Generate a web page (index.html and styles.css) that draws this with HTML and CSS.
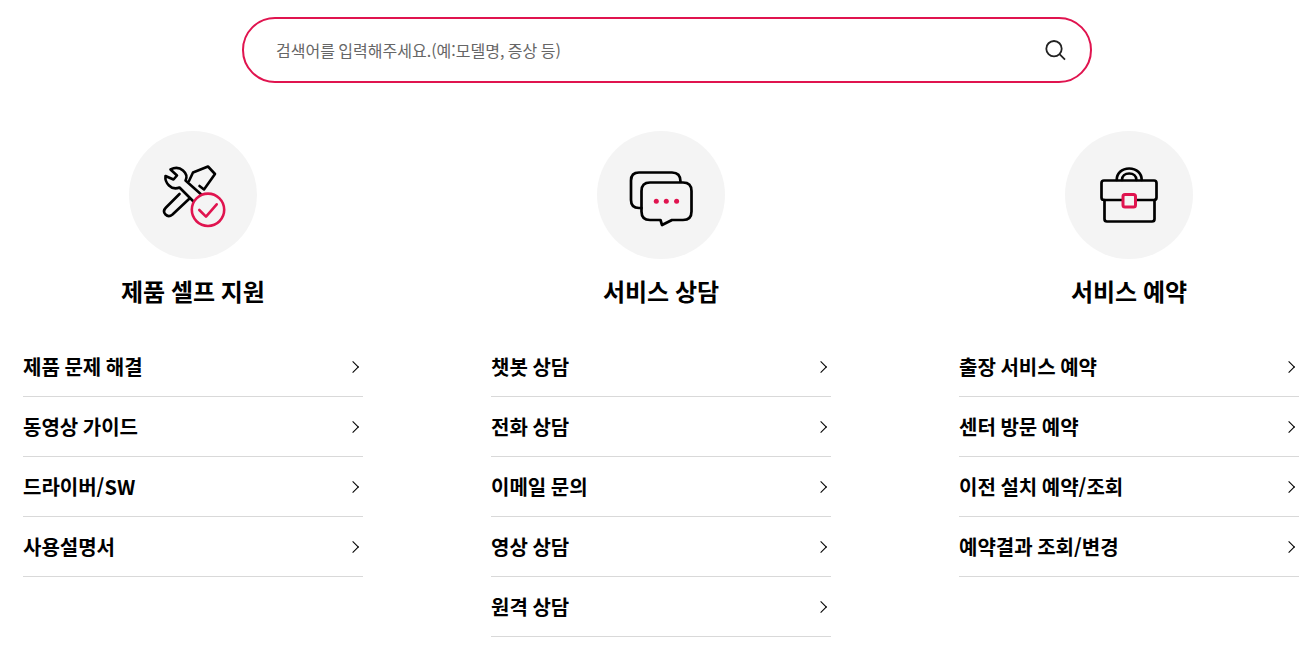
FILE: index.html
```html
<!DOCTYPE html>
<html lang="ko">
<head>
<meta charset="utf-8">
<title>고객지원</title>
<link rel="stylesheet" href="styles.css">
</head>
<body>
<main class="page">
  <form class="search">
    <input class="search-input" type="text" placeholder="검색어를 입력해주세요.(예:모델명, 증상 등)">
    <svg class="search-icon" width="24" height="24" viewBox="0 0 24 24" fill="none" stroke="#222" stroke-width="1.8"><circle cx="11" cy="10.700" r="7.700"/><path d="M16.500 16.200l5.500 5.500"/></svg>
  </form>
  <div class="columns">
    <section class="col">
      <div class="badge">
        <svg width="72" height="70" viewBox="0 0 72 70" fill="none" stroke="#000" stroke-width="2.600" stroke-linejoin="round" stroke-linecap="round">
          <path d="M8.500 16l8 3.500 3.500-4-6.500-6c4-2 9-2 12.500 1 3.500 3 4 7 2.500 10L46.500 36.500 39.500 44.500 22.500 27.500c-3.500 1.500-7.500 1-10.500-2C9.500 23 8 19.500 8.500 16z"/>
          <path d="M32 21l4-8.500L51 6.500l7 7.500-11 15.500-4.500-3.500"/>
          <path d="M22.500 34L9 47.500c-2.500 2.500-2.500 5 -.5 7 2 2 4.500 2 7 0L32 39"/>
          <circle cx="51" cy="49.800" r="16.200" fill="#f4f4f4" stroke="#e0144f"/>
          <path d="M42.300 50l6.700 6.700 10.700-12.400" stroke="#e0144f"/>
        </svg>
      </div>
      <h2 class="title">제품 셀프 지원</h2>
      <ul class="list">
        <li class="item">제품 문제 해결<i class="chev"></i></li>
        <li class="item">동영상 가이드<i class="chev"></i></li>
        <li class="item">드라이버/SW<i class="chev"></i></li>
        <li class="item">사용설명서<i class="chev"></i></li>
      </ul>
    </section>
    <section class="col">
      <div class="badge">
        <svg width="72" height="64" viewBox="0 0 72 64" fill="none" stroke="#000" stroke-width="2.700" stroke-linejoin="round" stroke-linecap="round">
          <path d="M16.500 45h-2.500C8.500 45 6 42 6 37V17.500C6 12 8.500 9.500 14 9.500h33c5.500 0 8.500 3 8.500 9"/>
          <path d="M25 19.500h33c5.500 0 8.500 3 8.500 8.500v20.500c0 5.500-3 8.500-8.500 8.500H47l-10 5-1.500-5H25c-5.500 0-8.500-3-8.500-8.500V28c0-5.500 3-8.500 8.500-8.500z"/>
          <g fill="#e0144f" stroke="none"><circle cx="31.300" cy="38.300" r="2.500"/><circle cx="41.300" cy="38.300" r="2.500"/><circle cx="51.600" cy="38.300" r="2.500"/></g>
        </svg>
      </div>
      <h2 class="title">서비스 상담</h2>
      <ul class="list">
        <li class="item">챗봇 상담<i class="chev"></i></li>
        <li class="item">전화 상담<i class="chev"></i></li>
        <li class="item">이메일 문의<i class="chev"></i></li>
        <li class="item">영상 상담<i class="chev"></i></li>
        <li class="item">원격 상담<i class="chev"></i></li>
      </ul>
    </section>
    <section class="col">
      <div class="badge">
        <svg width="68" height="64" viewBox="0 0 68 64" fill="none" stroke="#000" stroke-width="2.700" stroke-linejoin="round" stroke-linecap="round">
          <path d="M9 17.500h50c1.500 0 2.500 1 2.500 2.500v14.500c0 1.500-1 2.500-2.500 2.500H9c-1.500 0-2.500-1-2.500-2.500V20c0-1.500 1-2.500 2.500-2.500z"/>
          <path d="M9.500 37v19c0 1.500 1 2.500 2.500 2.500h45c1.500 0 2.500-1 2.500-2.500V37"/>
          <path d="M21.700 17c0-6.500 5-11.500 12.500-11.500s12.500 5 12.500 11.500M27 17c0-4 3-6.500 7.200-6.500s7.200 2.500 7.200 6.500"/>
          <rect x="28" y="31.500" width="12.500" height="12.500" rx="2" fill="#f4f4f4" stroke="#e0144f" stroke-width="3"/>
        </svg>
      </div>
      <h2 class="title">서비스 예약</h2>
      <ul class="list">
        <li class="item">출장 서비스 예약<i class="chev"></i></li>
        <li class="item">센터 방문 예약<i class="chev"></i></li>
        <li class="item">이전 설치 예약/조회<i class="chev"></i></li>
        <li class="item">예약결과 조회/변경<i class="chev"></i></li>
      </ul>
    </section>
  </div>
</main>
</body>
</html>
```
FILE: styles.css
```css
* { box-sizing: border-box; }
html, body { margin: 0; padding: 0; background: #fff; }
body { font-family: "Noto Sans CJK KR", "Noto Sans", sans-serif; color: #000; overflow: hidden; word-spacing: -1px; }
.page { width: 1315px; height: 648px; padding: 17px 16px 0 23px; }
.search {
  width: 850px; height: 66px; margin-left: 219px;
  border: 2px solid #e0144f; border-radius: 33px;
  display: flex; align-items: center; padding: 0 23px 0 32px;
}
.search-input {
  flex: 1; border: 0; outline: 0; background: none; padding: 0;
  font: 400 16px "Noto Sans CJK KR", sans-serif; color: #222; word-spacing: -1px;
}
.search-input::placeholder { color: #666; opacity: 1; }
.columns { display: flex; gap: 128px; margin-top: 48px; }
.col { width: 340px; }
.badge {
  width: 128px; height: 128px; margin: 0 auto; border-radius: 50%;
  background: #f4f4f4; display: flex; align-items: center; justify-content: center;
}
.title { margin: 14px 0 0; height: 36px; line-height: 36px; font-size: 24px; font-weight: 700; text-align: center; }
.list { list-style: none; margin: 28px 0 0; padding: 0; }
.item {
  height: 60px; border-bottom: 1px solid #d9d9d9;
  display: flex; align-items: center; justify-content: space-between;
  font-size: 20px; font-weight: 700; padding-right: 5px;
}
.chev {
  width: 8px; height: 8px; margin-right: 1.5px;
  border-top: 1.500px solid #000; border-right: 1.500px solid #000;
  transform: scale(1.06) rotate(45deg);
}
```
